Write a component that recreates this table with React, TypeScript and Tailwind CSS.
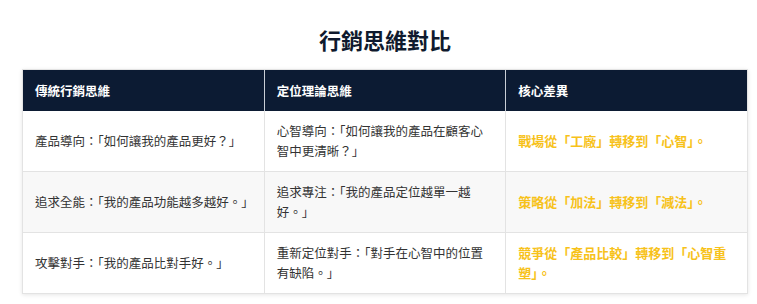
import React from 'react';

type Row = {
  traditional: string;
  positioning: string;
  core: string;
};

const rows: Row[] = [
  {
    traditional: '產品導向：「如何讓我的產品更好？」',
    positioning: '心智導向：「如何讓我的產品在顧客心智中更清晰？」',
    core: '戰場從「工廠」轉移到「心智」。',
  },
  {
    traditional: '追求全能：「我的產品功能越多越好。」',
    positioning: '追求專注：「我的產品定位越單一越好。」',
    core: '策略從「加法」轉移到「減法」。',
  },
  {
    traditional: '攻擊對手：「我的產品比對手好。」',
    positioning: '重新定位對手：「對手在心智中的位置有缺陷。」',
    core: '競爭從「產品比較」轉移到「心智重塑」。',
  },
];

const fontStack = "font-['Noto_Sans_CJK_TC','Noto_Sans',sans-serif]";

export default function App() {
  return (
    <div className={`min-h-screen bg-white pl-[22px] pr-[9px] pt-[24px] ${fontStack}`}>
      {/* Title */}
      <h2 className="mb-[15px] text-center text-[22px] font-bold leading-[30px] text-[#0f1a2e]">
        行銷思維對比
      </h2>

      {/* Comparison table */}
      <div className="border border-[#e3e3e3] shadow-[0_1px_4px_rgba(0,0,0,0.1)]">
        <table className="w-full table-fixed border-collapse">
          <thead>
            <tr className="bg-[#0c1b33] text-left text-[12.5px] font-bold leading-[17px] text-white">
              <th className="border-r border-[#c9ced6] px-3 py-3">傳統行銷思維</th>
              <th className="border-r border-[#c9ced6] px-3 py-3">定位理論思維</th>
              <th className="px-3 py-3">核心差異</th>
            </tr>
          </thead>
          <tbody>
            {rows.map((row, i) => (
              <tr
                key={row.core}
                className={`text-[12.5px] leading-[20px] ${i % 2 === 1 ? 'bg-[#f8f8f8]' : 'bg-white'} ${i < rows.length - 1 ? 'border-b border-[#e3e3e3]' : ''}`}
              >
                <td className="border-r border-[#e3e3e3] px-3 py-[10px] align-middle text-[#333333]">
                  {row.traditional}
                </td>
                <td className="border-r border-[#e3e3e3] px-3 py-[10px] align-middle text-[#333333]">
                  {row.positioning}
                </td>
                <td className="px-3 py-[10px] align-middle text-[13px] font-bold text-[#f7c21a]">
                  {row.core}
                </td>
              </tr>
            ))}
          </tbody>
        </table>
      </div>
    </div>
  );
}
